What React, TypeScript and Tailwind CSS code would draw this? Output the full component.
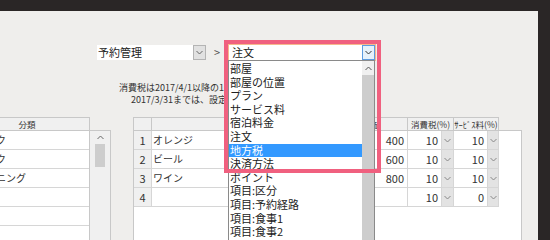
import React from "react";

function ChevDown({ c = "#555" }: { c?: string }) {
  return (
    <svg width="7" height="5" viewBox="0 0 7 5" className="block">
      <path d="M0.5 1 L3.5 4 L6.5 1" stroke={c} strokeWidth="1" fill="none" />
    </svg>
  );
}

function ChevUp({ c = "#555" }: { c?: string }) {
  return (
    <svg width="7" height="5" viewBox="0 0 7 5" className="block">
      <path d="M0.5 4 L3.5 1 L6.5 4" stroke={c} strokeWidth="1" fill="none" />
    </svg>
  );
}

const items = [
  "部屋",
  "部屋の位置",
  "プラン",
  "サービス料",
  "宿泊料金",
  "注文",
  "地方税",
  "決済方法",
  "ポイント",
  "項目:区分",
  "項目:予約経路",
  "項目:食事1",
  "項目:食事2",
  "項目:食事3",
];

const rows = [
  { n: "1", name: "オレンジ", price: "400", tax: "10", svc: "10" },
  { n: "2", name: "ビール", price: "600", tax: "10", svc: "10" },
  { n: "3", name: "ワイン", price: "800", tax: "10", svc: "10" },
  { n: "4", name: "", price: "", tax: "10", svc: "0" },
];

const leftRows = ["ドリンク", "スナック", "クリーニング", "", "", ""];

export default function App() {
  return (
    <div className="w-[550px] h-[240px] overflow-hidden bg-[#2a2626] pt-[11px] font-['Noto_Sans_CJK_JP','Noto_Sans',sans-serif] text-[#222]">
      <div className="relative w-[538px] h-[229px] overflow-hidden bg-[#efeeec]">
        {/* selector row */}
        <div className="flex items-start pl-[97px] pt-[33px]">
          <div className="flex mt-[1px] h-[15px]">
            <div className="w-[96px] h-[15px] bg-white text-[11px] leading-[15px] pl-[1px] whitespace-nowrap">
              予約管理
            </div>
            <div className="w-[13px] h-[15px] bg-[#e1e1e1] border border-[#b4b4b4] flex items-center justify-center">
              <ChevDown c="#666" />
            </div>
          </div>
          <div className="w-[22px] h-[17px] text-center text-[11px] leading-[17px] text-[#555]">&gt;</div>
          <div className="relative w-[148px] h-[17px] border border-[#f6b88c] flex">
            <div className="w-[133px] h-[15px] bg-white text-[11px] leading-[15px] pl-[3px] whitespace-nowrap">
              注文
            </div>
            <div className="w-[13px] h-[15px] bg-[#e5f1fb] border border-[#5b9be0] flex items-center justify-center">
              <ChevDown c="#333" />
            </div>
            {/* dropdown list */}
            <div className="absolute left-[-1px] top-[15px] w-[147px] h-[200px] bg-white border border-[#8a8a8a] flex z-10">
              <div className="w-[133px] pt-[1px]">
                {items.map((t, i) =>
                  i === 6 ? (
                    <div
                      key={i}
                      className="h-[13.6px] text-[11px] leading-[13.6px] pl-[1px] whitespace-nowrap bg-[#3399ff] text-white"
                    >
                      {t}
                    </div>
                  ) : (
                    <div
                      key={i}
                      className="h-[13.6px] text-[11px] leading-[13.6px] pl-[1px] whitespace-nowrap text-[#222]"
                    >
                      {t}
                    </div>
                  )
                )}
              </div>
              <div className="w-[12px] flex flex-col">
                <div className="h-[14px] bg-[#f0f0f0] flex items-center justify-center">
                  <ChevUp c="#555" />
                </div>
                <div className="flex-1 bg-[#cdcdcd]" />
              </div>
            </div>
            {/* highlight box */}
            <div className="absolute left-[-5px] top-[-5px] w-[157px] h-[133px] border-4 border-[#f0607f] z-20 pointer-events-none" />
          </div>
        </div>

        {/* notes */}
        <div className="mt-[21px] text-[9px] leading-[11.5px] text-[#333] whitespace-nowrap">
          <div className="pl-[119px]">消費税は2017/4/1以降の10%で計算します。</div>
          <div className="pl-[131px]">2017/3/31までは、設定画面で変更してください。</div>
        </div>

        {/* tables */}
        <div className="mt-[12px] flex items-start">
          {/* left table */}
          <div className="ml-[-36px] w-[147px] shrink-0">
            <div className="w-[126px] h-[13px] bg-[#f0f0f0] border border-b-0 border-[#c8c8c8] text-center text-[8.5px] leading-[12px] text-[#333]">
              分類
            </div>
            <div className="flex h-[120px] bg-white border border-[#c8c8c8]">
              <div className="w-[124px]">
                {leftRows.map((t, i) => (
                  <div
                    key={i}
                    className="h-[19px] border-b border-[#d6d6d6] text-[10px] leading-[18px] pl-[1px] whitespace-nowrap text-[#333]"
                  >
                    {t}
                  </div>
                ))}
              </div>
              <div className="w-[21px] border-l border-[#c8c8c8] bg-[#f0f0f0]">
                <div className="h-[13px] flex items-center justify-center">
                  <ChevUp c="#666" />
                </div>
                <div className="ml-[5px] w-[10px] h-[23px] bg-[#cdcdcd]" />
              </div>
            </div>
          </div>

          {/* middle table */}
          <div className="ml-[22px] shrink-0">
            <div className="flex h-[13px] text-[8.5px] leading-[12px] text-center text-[#333] whitespace-nowrap">
              <div className="w-[18px] bg-[#f0f0f0] border-t border-l border-[#c8c8c8]" />
              <div className="w-[179px] bg-[#f0f0f0] border-t border-l border-[#c8c8c8]" />
              <div className="w-[77px] bg-[#f0f0f0] border-t border-l border-[#c8c8c8]">単価</div>
              <div className="w-[46px] bg-[#f0f0f0] border-t border-l border-[#c8c8c8]">消費税(%)</div>
              <div className="w-[46px] bg-[#f0f0f0] border-t border-l border-r border-[#c8c8c8]">ｻｰﾋﾞｽ料(%)</div>
            </div>
            <div className="w-[389px] h-[120px] bg-white border border-[#c8c8c8]">
              {rows.map((r) => (
                <div key={r.n} className="flex h-[19px] w-[365px] border-b border-[#d6d6d6] text-[11px] leading-[18px] text-[#333] whitespace-nowrap">
                  <div className="w-[18px] bg-[#f0f0f0] border-r border-[#d6d6d6] text-center">{r.n}</div>
                  <div className="w-[179px] border-r border-[#d6d6d6] pl-[1px] text-[10px]">{r.name}</div>
                  <div className="w-[77px] border-r border-[#d6d6d6] text-right pr-[3px]">{r.price}</div>
                  <div className="w-[34px] border-r border-[#d6d6d6] text-right pr-[3px]">{r.tax}</div>
                  <div className="w-[12px] bg-[#e3e3e3] border-r border-[#d6d6d6] flex items-center justify-center">
                    <ChevDown c="#888" />
                  </div>
                  <div className="w-[34px] border-r border-[#d6d6d6] text-right pr-[3px]">{r.svc}</div>
                  <div className="w-[11px] bg-[#e3e3e3] border-r border-[#d6d6d6] flex items-center justify-center">
                    <ChevDown c="#888" />
                  </div>
                </div>
              ))}
            </div>
          </div>
        </div>
      </div>
    </div>
  );
}
